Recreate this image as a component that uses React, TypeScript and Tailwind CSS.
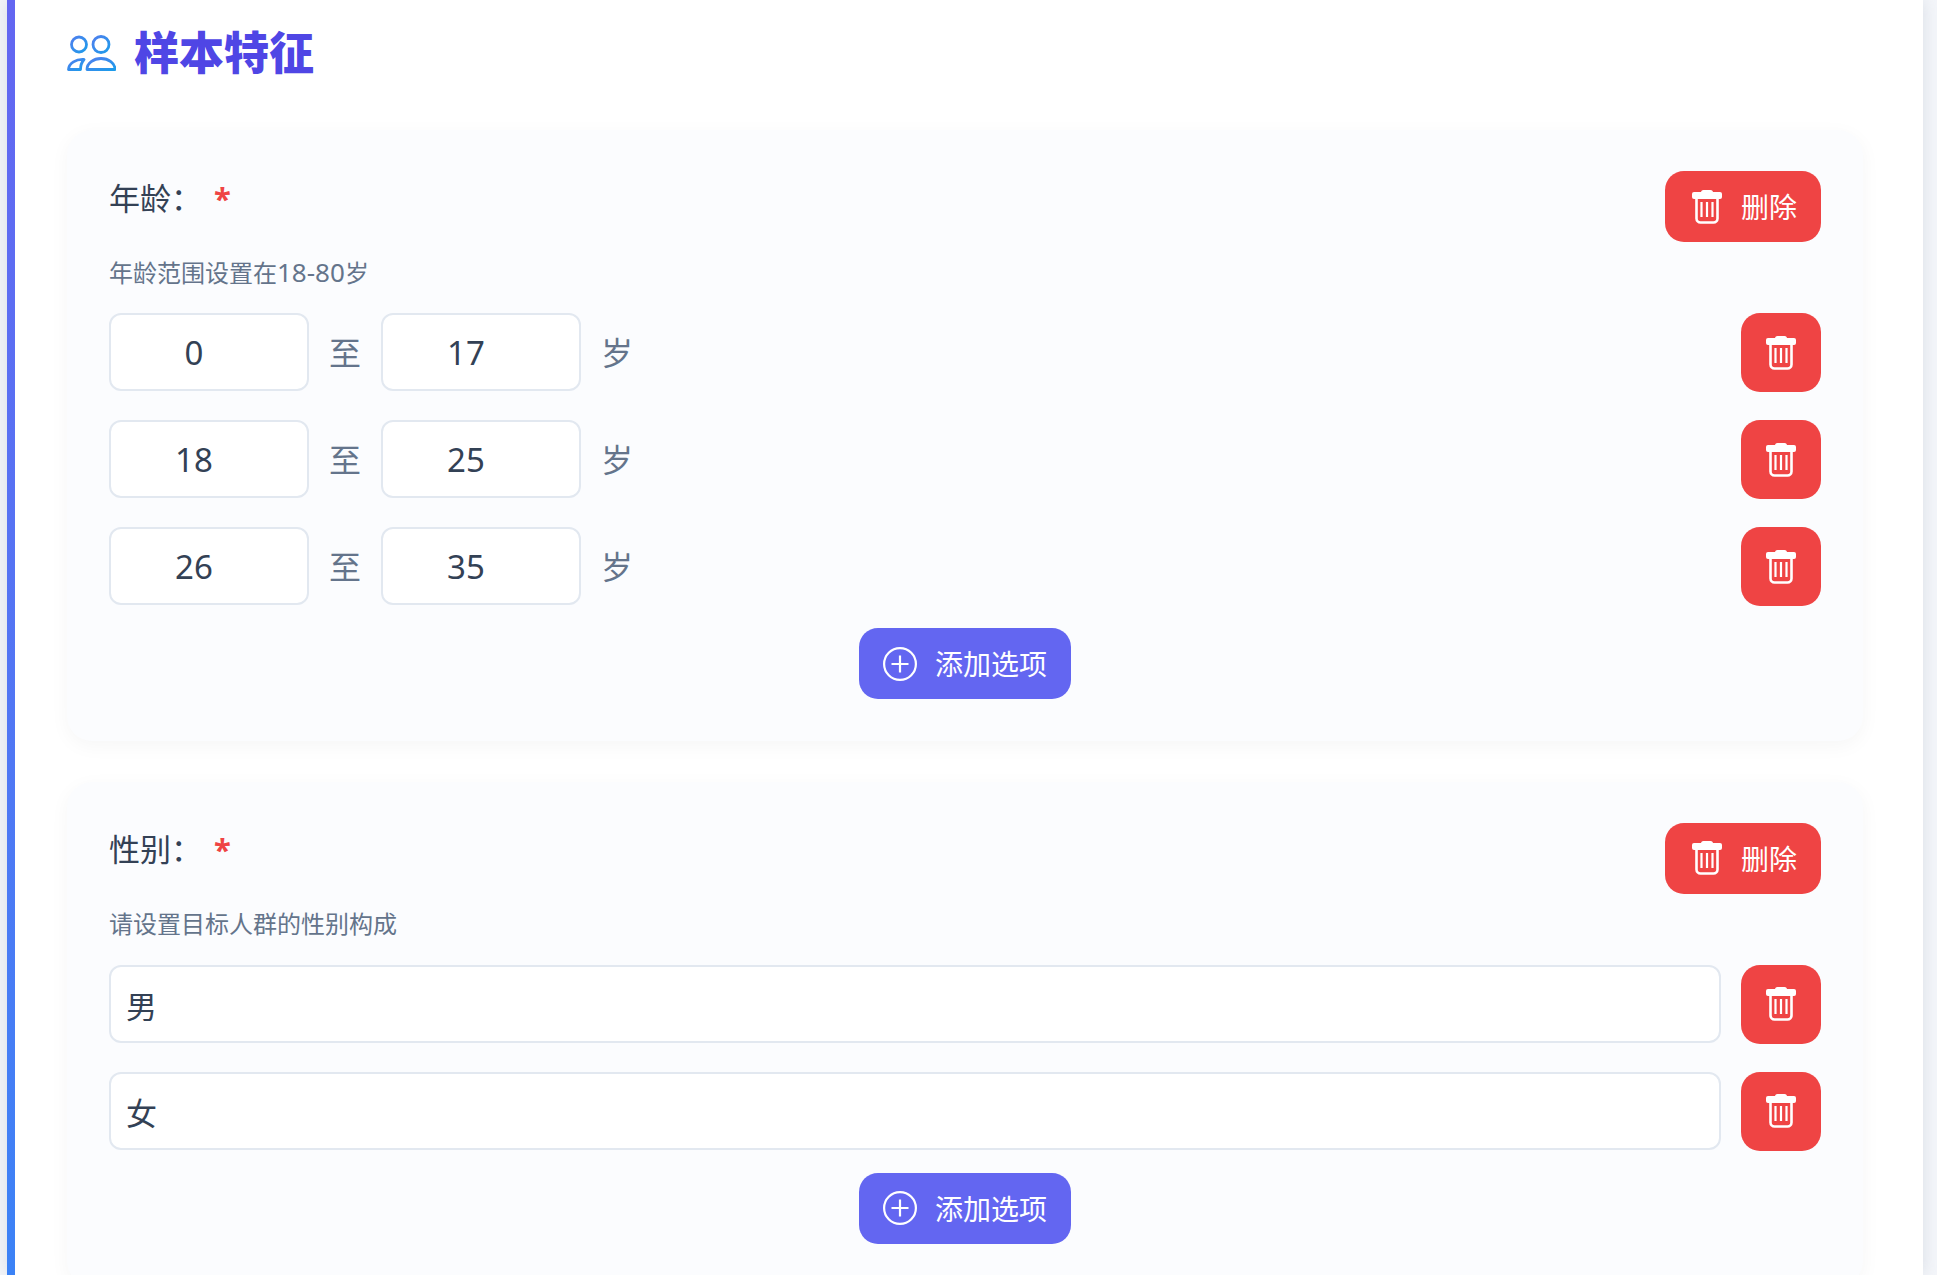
import React from 'react'

const FONT = "font-['Noto_Sans','Noto_Sans_CJK_SC',sans-serif]"

const TrashIcon: React.FC = () => (
  <svg width="36" height="36" viewBox="0 0 36 36" fill="none" className="shrink-0">
    <path d="M12 3.5a2.5 2.5 0 0 1 2.5-2.5h7a2.5 2.5 0 0 1 2.5 2.5v1h-12z" fill="#fff" />
    <rect x="3" y="3" width="30" height="7" rx="2" fill="#fff" />
    <path
      d="M7.5 9v20.5a4 4 0 0 0 4 4h13a4 4 0 0 0 4-4V9"
      stroke="#fff"
      strokeWidth="2.6"
    />
    <path d="M12.5 13v15M18 13v15M23.5 13v15" stroke="#fff" strokeWidth="2.2" />
  </svg>
)

const PlusCircleIcon: React.FC = () => (
  <svg width="34" height="34" viewBox="0 0 34 34" fill="none" className="shrink-0">
    <circle cx="17" cy="17" r="15.9" stroke="#fff" strokeWidth="2.2" />
    <path d="M17 8.5v17M8.5 17h17" stroke="#fff" strokeWidth="2.2" />
  </svg>
)

const UsersIcon: React.FC = () => (
  <svg width="49" height="36" viewBox="0 0 49 36" fill="none" className="shrink-0">
    <defs>
      <linearGradient id="usersGradient" x1="0" y1="0" x2="1" y2="1">
        <stop offset="0" stopColor="#4f7fee" />
        <stop offset="1" stopColor="#1d9bea" />
      </linearGradient>
    </defs>
    <g stroke="url(#usersGradient)" strokeWidth="2.8" strokeLinejoin="round">
      <circle cx="12" cy="9.5" r="7.5" />
      <circle cx="34" cy="9.5" r="8" />
      <path d="M17 24.5c-8-.5-15 3.5-15.5 10h12c0-3.5 1-7 3.5-10z" />
      <path d="M20 34.5c0-6.5 6.5-11 14-11s14 4.5 14 11z" />
    </g>
  </svg>
)

const IconButton: React.FC = () => (
  <button className="flex h-[79px] w-[80px] shrink-0 items-center justify-center rounded-[19px] bg-[#ef4444]">
    <TrashIcon />
  </button>
)

const DeleteButton: React.FC = () => (
  <button className="flex h-[71px] w-[156px] items-center gap-[16px] rounded-[19px] bg-[#ef4444] pl-[24px] text-[28px] text-white">
    <TrashIcon />
    <span className="pt-[1px]">删除</span>
  </button>
)

const AddButton: React.FC = () => (
  <div className="mt-[22px] flex justify-center">
    <button className="flex h-[71px] w-[212px] items-center justify-center gap-[18px] rounded-[19px] bg-[#6366f1] text-[28px] text-white">
      <PlusCircleIcon />
      <span className="pt-[1px]">添加选项</span>
    </button>
  </div>
)

const inputClass =
  'h-[78px] rounded-[12px] border-2 border-[#e2e8f0] bg-white text-[#334155] outline-none'

const RangeRow: React.FC<{ from: number; to: number }> = ({ from, to }) => (
  <div className="flex items-start">
    <input type="number" defaultValue={from} className={`${inputClass} w-[200px] pr-[15px] text-center text-[33px]`} />
    <span className="w-[72px] self-center text-center text-[32px] text-[#64748b]">至</span>
    <input type="number" defaultValue={to} className={`${inputClass} w-[200px] pr-[15px] text-center text-[33px]`} />
    <span className="ml-[20px] self-center text-[32px] text-[#64748b]">岁</span>
    <div className="ml-auto">
      <IconButton />
    </div>
  </div>
)

const TextRow: React.FC<{ value: string }> = ({ value }) => (
  <div className="flex items-center gap-[20px]">
    <input type="text" defaultValue={value} className={`${inputClass} min-w-0 flex-1 px-[15px] text-[31px]`} />
    <IconButton />
  </div>
)

const QuestionCard: React.FC<{ label: string; hint: React.ReactNode; children: React.ReactNode }> = ({
  label,
  hint,
  children,
}) => (
  <section className="rounded-[25px] bg-[#fbfcfe] px-[42px] pt-[41px] pb-[42px] shadow-[0_5px_20px_rgba(0,0,0,0.04)]">
    <div className="flex items-start justify-between">
      <div>
        <div className="flex h-[54px] items-center text-[31px] text-[#334155]">
          <span>{label}</span>
          <span className="ml-[12px] font-bold text-[#ef4444]">*</span>
        </div>
        <p className="mt-[29px] mb-[23px] h-[36px] text-[24px] leading-[36px] text-[#64748b]">{hint}</p>
      </div>
      <DeleteButton />
    </div>
    <div className="flex flex-col gap-[28px]">{children}</div>
    <AddButton />
  </section>
)

export default function App() {
  return (
    <div className={`h-[1275px] overflow-hidden bg-[#f4f6fa] pr-[14px] pl-[7px] ${FONT}`}>
      <main className="flex h-full bg-white shadow-[0_0_16px_rgba(100,116,139,0.18)]">
        <div className="w-[8px] shrink-0 bg-gradient-to-b from-[#6366f1] to-[#3b82f6]" />
        <div className="min-w-0 flex-1 pr-[60px] pl-[52px]">
          <h2 className="flex h-[130px] items-start gap-[18px] pt-[23px] pb-[47px]">
            <span className="flex h-[60px] items-center">
              <UsersIcon />
            </span>
            <span className="text-[45px] leading-[60px] font-black text-[#4f46e5]">样本特征</span>
          </h2>
          <div className="flex flex-col gap-[40.5px]">
            <QuestionCard
              label="年龄："
              hint={
                <>
                  年龄范围设置在<span className="text-[26px]">18-80</span>岁
                </>
              }
            >
              <RangeRow from={0} to={17} />
              <RangeRow from={18} to={25} />
              <RangeRow from={26} to={35} />
            </QuestionCard>
            <QuestionCard label="性别：" hint="请设置目标人群的性别构成">
              <TextRow value="男" />
              <TextRow value="女" />
            </QuestionCard>
          </div>
        </div>
      </main>
    </div>
  )
}
